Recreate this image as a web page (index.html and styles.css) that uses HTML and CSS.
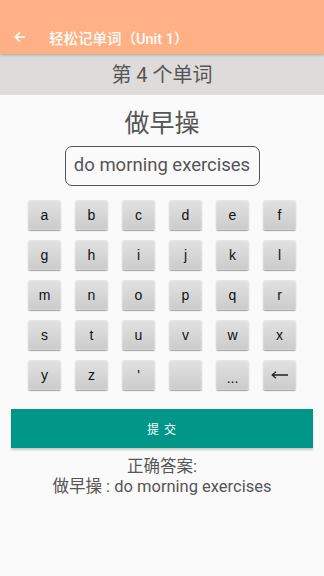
FILE: index.html
```html
<!DOCTYPE html>
<html lang="zh">
<head>
    <meta charset="UTF-8">
    <meta name="viewport" content="width=device-width, initial-scale=1.0">
    <title>轻松记单词</title>
    <link rel="stylesheet" href="styles.css">
</head>
<body>
    <div class="toolbar">
        <svg class="back" width="12" height="12" viewBox="0 0 12 12">
            <path d="M11 6H1.5M6 1.2L1.2 6 6 10.8" fill="none" stroke="#fff" stroke-width="1.6"/>
        </svg>
        <div class="title">轻松记单词（Unit 1）</div>
    </div>

    <div class="counter">第 4 个单词</div>

    <div class="word">做早操</div>
    <div class="answer-box">do morning exercises</div>

    <div class="keyboard">
        <button class="key">a</button>
        <button class="key">b</button>
        <button class="key">c</button>
        <button class="key">d</button>
        <button class="key">e</button>
        <button class="key">f</button>
        <button class="key">g</button>
        <button class="key">h</button>
        <button class="key">i</button>
        <button class="key">j</button>
        <button class="key">k</button>
        <button class="key">l</button>
        <button class="key">m</button>
        <button class="key">n</button>
        <button class="key">o</button>
        <button class="key">p</button>
        <button class="key">q</button>
        <button class="key">r</button>
        <button class="key">s</button>
        <button class="key">t</button>
        <button class="key">u</button>
        <button class="key">v</button>
        <button class="key">w</button>
        <button class="key">x</button>
        <button class="key">y</button>
        <button class="key">z</button>
        <button class="key">'</button>
        <button class="key"></button>
        <button class="key dots">...</button>
        <button class="key">
            <svg width="18" height="8" viewBox="0 0 18 8">
                <path d="M17 4H1.5M5 0.8L1.2 4 5 7.2" fill="none" stroke="#222" stroke-width="1.3"/>
            </svg>
        </button>
    </div>

    <button class="submit">提 交</button>

    <div class="result">
        <div>正确答案:</div>
        <div>做早操 : do morning exercises</div>
    </div>
</body>
</html>
```

FILE: styles.css
```css
* {
    margin: 0;
    padding: 0;
    box-sizing: border-box;
}

body {
    font-family: Roboto, "Noto Sans CJK SC", sans-serif;
    background: #fafafa;
    color: #555;
    width: 324px;
    min-height: 576px;
}

.toolbar {
    height: 54px;
    background: #ffb085;
    display: flex;
    align-items: center;
    padding: 20px 0 0 14px;
    box-shadow: 0 1px 3px rgba(0, 0, 0, 0.25);
    position: relative;
    z-index: 1;
}

.back {
    display: block;
}

.title {
    margin-left: 23px;
    color: #fff;
    font-size: 14.5px;
    font-weight: 500;
}

.counter {
    height: 41px;
    background: #dedbda;
    text-align: center;
    font-size: 20px;
    line-height: 42px;
    color: #555;
}

.word {
    margin-top: 14px;
    text-align: center;
    font-size: 25px;
    line-height: 30px;
}

.answer-box {
    margin: 7px auto 0;
    width: 195px;
    height: 40px;
    border: 1.5px solid #555;
    border-radius: 7px;
    text-align: center;
    line-height: 37px;
    font-size: 18.5px;
    color: #555;
}

.keyboard {
    margin: 14px 0 0 28px;
    display: grid;
    grid-template-columns: repeat(6, 33px);
    grid-auto-rows: 30px;
    column-gap: 14px;
    row-gap: 10px;
}

.key {
    border: none;
    border-radius: 2px;
    background: linear-gradient(#e2e2e2, #cbcbcb);
    box-shadow: 0 1px 1px rgba(0, 0, 0, 0.35), inset 0 0 2px rgba(255, 255, 255, 0.6);
    font-family: "Liberation Sans", Arial, sans-serif;
    font-size: 14px;
    color: #111;
    display: flex;
    align-items: center;
    justify-content: center;
}

.dots {
    padding-top: 6px;
}

.submit {
    display: block;
    margin: 19px auto 0;
    width: 302px;
    height: 39px;
    border: none;
    background: #009688;
    color: #fff;
    font-family: Roboto, "Noto Sans CJK SC", sans-serif;
    font-size: 12px;
    letter-spacing: 1px;
    box-shadow: 0 2px 2px rgba(0, 0, 0, 0.2);
}

.result {
    margin-top: 9px;
    text-align: center;
    font-size: 16.5px;
    line-height: 20px;
}
```
